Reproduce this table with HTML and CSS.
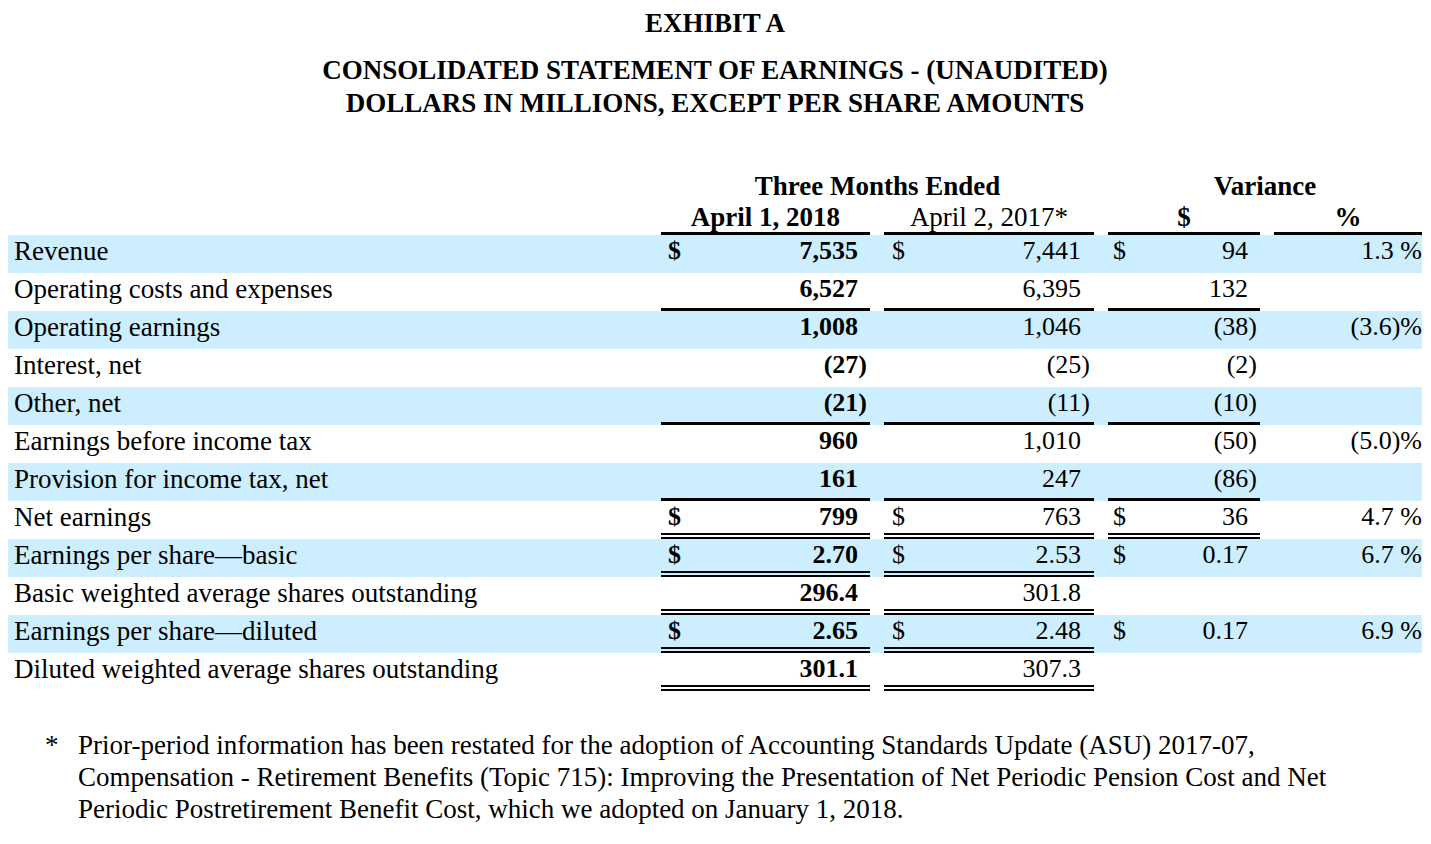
FILE: index.html
```html
<!DOCTYPE html>
<html>
<head>
<meta charset="utf-8">
<link rel="stylesheet" href="styles.css">
</head>
<body>
<div class="page">
  <div class="titles">
    <div class="exhibit">EXHIBIT A</div>
    <div class="subtitle">CONSOLIDATED STATEMENT OF EARNINGS - (UNAUDITED)<br>DOLLARS IN MILLIONS, EXCEPT PER SHARE AMOUNTS</div>
  </div>

  <div class="table">
    <div class="row head1">
      <div class="lbl"></div>
      <div class="span2 b">Three Months Ended</div>
      <div class="span2b b">Variance</div>
    </div>
    <div class="row head2">
      <div class="lbl"></div>
      <div class="hc ul b">April 1, 2018</div>
      <div class="hc ul">April 2, 2017*</div>
      <div class="hc ul b">$</div>
      <div class="hc ul b">%</div>
    </div>

    <div class="row shade">
      <div class="lbl">Revenue</div>
      <div class="v c1 b"><span class="d">$</span><span class="n">7,535</span></div>
      <div class="v c2"><span class="d">$</span><span class="n">7,441</span></div>
      <div class="v c3"><span class="d">$</span><span class="n">94</span></div>
      <div class="v c4">1.3&nbsp;%</div>
    </div>
    <div class="row">
      <div class="lbl">Operating costs and expenses</div>
      <div class="v c1 b ul"><span class="n">6,527</span></div>
      <div class="v c2 ul"><span class="n">6,395</span></div>
      <div class="v c3 ul"><span class="n">132</span></div>
      <div class="v c4"></div>
    </div>
    <div class="row shade">
      <div class="lbl">Operating earnings</div>
      <div class="v c1 b"><span class="n">1,008</span></div>
      <div class="v c2"><span class="n">1,046</span></div>
      <div class="v c3"><span class="n">(38<span class="cp">)</span></span></div>
      <div class="v c4">(3.6)%</div>
    </div>
    <div class="row">
      <div class="lbl">Interest, net</div>
      <div class="v c1 b"><span class="n">(27<span class="cp">)</span></span></div>
      <div class="v c2"><span class="n">(25<span class="cp">)</span></span></div>
      <div class="v c3"><span class="n">(2<span class="cp">)</span></span></div>
      <div class="v c4"></div>
    </div>
    <div class="row shade">
      <div class="lbl">Other, net</div>
      <div class="v c1 b ul"><span class="n">(21<span class="cp">)</span></span></div>
      <div class="v c2 ul"><span class="n">(11<span class="cp">)</span></span></div>
      <div class="v c3 ul"><span class="n">(10<span class="cp">)</span></span></div>
      <div class="v c4"></div>
    </div>
    <div class="row">
      <div class="lbl">Earnings before income tax</div>
      <div class="v c1 b"><span class="n">960</span></div>
      <div class="v c2"><span class="n">1,010</span></div>
      <div class="v c3"><span class="n">(50<span class="cp">)</span></span></div>
      <div class="v c4">(5.0)%</div>
    </div>
    <div class="row shade">
      <div class="lbl">Provision for income tax, net</div>
      <div class="v c1 b ul"><span class="n">161</span></div>
      <div class="v c2 ul"><span class="n">247</span></div>
      <div class="v c3 ul"><span class="n">(86<span class="cp">)</span></span></div>
      <div class="v c4"></div>
    </div>
    <div class="row">
      <div class="lbl">Net earnings</div>
      <div class="v c1 b dl"><span class="d">$</span><span class="n">799</span></div>
      <div class="v c2 dl"><span class="d">$</span><span class="n">763</span></div>
      <div class="v c3 dl"><span class="d">$</span><span class="n">36</span></div>
      <div class="v c4">4.7&nbsp;%</div>
    </div>
    <div class="row shade">
      <div class="lbl">Earnings per share&mdash;basic</div>
      <div class="v c1 b dl"><span class="d">$</span><span class="n">2.70</span></div>
      <div class="v c2 dl"><span class="d">$</span><span class="n">2.53</span></div>
      <div class="v c3"><span class="d">$</span><span class="n">0.17</span></div>
      <div class="v c4">6.7&nbsp;%</div>
    </div>
    <div class="row">
      <div class="lbl">Basic weighted average shares outstanding</div>
      <div class="v c1 b dl"><span class="n">296.4</span></div>
      <div class="v c2 dl"><span class="n">301.8</span></div>
      <div class="v c3"></div>
      <div class="v c4"></div>
    </div>
    <div class="row shade">
      <div class="lbl">Earnings per share&mdash;diluted</div>
      <div class="v c1 b dl"><span class="d">$</span><span class="n">2.65</span></div>
      <div class="v c2 dl"><span class="d">$</span><span class="n">2.48</span></div>
      <div class="v c3"><span class="d">$</span><span class="n">0.17</span></div>
      <div class="v c4">6.9&nbsp;%</div>
    </div>
    <div class="row">
      <div class="lbl">Diluted weighted average shares outstanding</div>
      <div class="v c1 b dl"><span class="n">301.1</span></div>
      <div class="v c2 dl"><span class="n">307.3</span></div>
      <div class="v c3"></div>
      <div class="v c4"></div>
    </div>
  </div>

  <div class="note">
    <div class="star">*</div>
    <div class="notetext">Prior-period information has been restated for the adoption of Accounting Standards Update (ASU) 2017-07, Compensation - Retirement Benefits (Topic 715): Improving the Presentation of Net Periodic Pension Cost and Net Periodic Postretirement Benefit Cost, which we adopted on January 1, 2018.</div>
  </div>
</div>
</body>
</html>
```

FILE: styles.css
```css
html, body {
  margin: 0;
  padding: 0;
  background: #ffffff;
}
body {
  font-family: "Liberation Serif", "Times New Roman", serif;
  font-size: 27px;
  color: #000;
}
.page {
  width: 1414px;
  padding-left: 8px;
}
.titles {
  text-align: center;
  font-weight: bold;
  padding-top: 8px;
}
.exhibit {
  line-height: 30px;
}
.subtitle {
  margin-top: 16px;
  line-height: 33px;
}
.table {
  margin-top: 51px;
}
.row {
  display: grid;
  grid-template-columns: 639px 209px 210px 152px 148px;
  column-gap: 14px;
  height: 38px;
  align-items: stretch;
}
.row.shade {
  background: #cceeff;
}
.row.head1 {
  height: 31px;
}
.row.head2 {
  height: 33px;
}
.b {
  font-weight: bold;
}
.span2 {
  grid-column: 2 / 4;
  text-align: center;
  line-height: 30px;
}
.span2b {
  grid-column: 4 / 6;
  text-align: center;
  line-height: 30px;
}
.hc {
  text-align: center;
  line-height: 30px;
  box-sizing: border-box;
}
.lbl {
  padding-left: 6px;
  line-height: 32px;
  white-space: nowrap;
}
.v {
  display: flex;
  justify-content: space-between;
  align-items: flex-start;
  font-size: 26px;
  line-height: 32px;
  box-sizing: border-box;
  white-space: nowrap;
}
.v .n {
  margin-left: auto;
}
.c1 {
  padding-left: 7px;
  padding-right: 12px;
}
.c2 {
  padding-left: 8px;
  padding-right: 13px;
}
.c3 {
  padding-left: 5px;
  padding-right: 12px;
}
.c4 {
  justify-content: flex-end;
  padding-right: 0;
}
.cp {
  margin-right: -9px;
}
.ul {
  border-bottom: 3px solid #000;
}
.dl {
  border-bottom: 6px double #000;
}
.note {
  display: flex;
  margin-top: 38px;
  line-height: 32px;
}
.star {
  width: 33px;
  padding-left: 37px;
  box-sizing: content-box;
  flex: none;
}
.notetext {
  width: 1300px;
}
```
